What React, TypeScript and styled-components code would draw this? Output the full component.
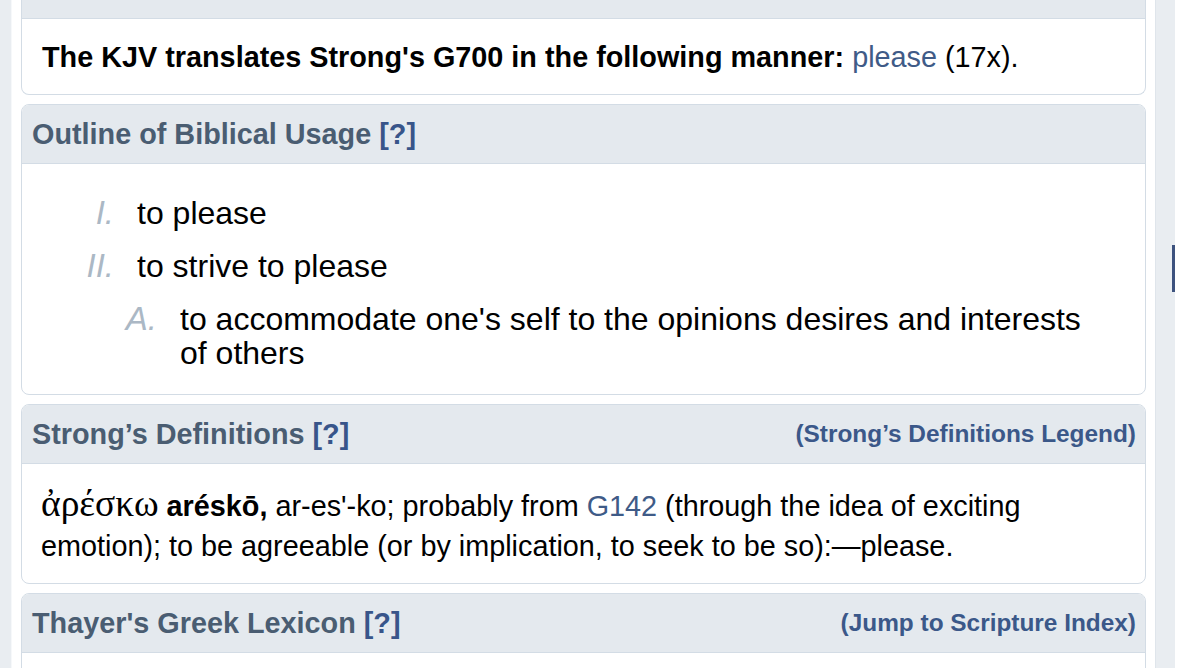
import React from "react";
import styled, { createGlobalStyle } from "styled-components";

const GlobalStyle = createGlobalStyle`
  html, body {
    margin: 0;
    padding: 0;
    background: #ffffff;
  }
  body {
    font-family: "Liberation Sans", Arial, sans-serif;
    color: #000000;
  }
`;

const Page = styled.div`
  display: flex;
  height: 668px;
  overflow: hidden;
  background: #ffffff;
`;

const LeftStrip = styled.div`
  width: 11px;
  flex-shrink: 0;
  background: #e9edf1;
  border-right: 1px solid #f6f8fa;
`;

const RightStrip = styled.div`
  width: 19px;
  flex-shrink: 0;
  background: #e9edf1;
  border-left: 1px solid #dfe5eb;
  display: flex;
  flex-direction: column;
  align-items: flex-end;
`;

const ScrollMark = styled.div`
  width: 3px;
  height: 47px;
  margin-top: 245px;
  background: #3d527e;
`;

const RightGap = styled.div`
  width: 12px;
  flex-shrink: 0;
  background: #ffffff;
`;

const Main = styled.main`
  flex: 1;
  min-width: 0;
  padding: 0 9px;
  display: flex;
  flex-direction: column;
  gap: 9px;
`;

const Card = styled.section<{ $cut?: boolean }>`
  border: 1px solid #d3dce5;
  border-top: ${(p) => (p.$cut ? "none" : "1px solid #d3dce5")};
  border-radius: ${(p) => (p.$cut ? "0 0 8px 8px" : "8px")};
  overflow: hidden;
  background: #ffffff;
  flex-shrink: 0;
`;

const CardHeader = styled.header<{ $stub?: boolean }>`
  display: flex;
  justify-content: space-between;
  align-items: center;
  background: #e4e9ee;
  border-bottom: 1px solid #d3dce5;
  padding: ${(p) => (p.$stub ? "0" : "9px 9px 9px 10px")};
  height: ${(p) => (p.$stub ? "18px" : "auto")};
  line-height: 40px;
`;

const Title = styled.h2`
  margin: 0;
  font-size: 28.8px;
  font-weight: bold;
  color: #4a5d72;
`;

const Help = styled.a`
  color: #38558a;
  text-decoration: none;
`;

const HeaderLink = styled.a`
  font-size: 24.4px;
  font-weight: bold;
  color: #3b5889;
  text-decoration: none;
`;

const CardBody = styled.div<{ $pad: string }>`
  padding: ${(p) => p.$pad};
  font-size: 28.8px;
  line-height: 40px;
`;

const Strong = styled.b`
  font-weight: bold;
`;

const Link = styled.a`
  color: #3f5b87;
  text-decoration: none;
`;

const Greek = styled.span`
  font-family: "Liberation Serif", "DejaVu Serif", serif;
  font-size: 37.5px;
  line-height: 0.8;
`;

const OutlineList = styled.ol`
  list-style: none;
  margin: 0;
  padding: 0;
  display: flex;
  flex-direction: column;
  gap: 19px;
`;

const Item = styled.li<{ $marker: number; $gap: number }>`
  display: grid;
  grid-template-columns: ${(p) => p.$marker}px 1fr;
  column-gap: ${(p) => p.$gap}px;
  font-size: 32px;
  line-height: 34px;
`;

const Marker = styled.span`
  display: flex;
  justify-content: flex-end;
  white-space: nowrap;
  font-style: italic;
  font-size: 33px;
  color: #abb8c5;
`;

const ItemText = styled.div`
  display: flex;
  flex-direction: column;
  gap: 19px;
`;

export default function App() {
  return (
    <>
      <GlobalStyle />
      <Page>
        <LeftStrip />
        <Main>
          <Card $cut>
            <CardHeader $stub />
            <CardBody $pad="18px 20px 17px 20px">
              <Strong>The KJV translates Strong's G700 in the following manner:</Strong>{" "}
              <Link href="#">please</Link> (17x).
            </CardBody>
          </Card>

          <Card>
            <CardHeader>
              <Title>
                Outline of Biblical Usage <Help href="#">[?]</Help>
              </Title>
            </CardHeader>
            <CardBody $pad="32px 48px 24px 46px">
              <OutlineList>
                <Item $marker={46} $gap={23}>
                  <Marker>I.</Marker>
                  <ItemText>to please</ItemText>
                </Item>
                <Item $marker={46} $gap={23}>
                  <Marker>II.</Marker>
                  <ItemText>
                    <span>to strive to please</span>
                    <OutlineList>
                      <Item $marker={20} $gap={23}>
                        <Marker>A.</Marker>
                        <span>
                          to accommodate one's self to the opinions desires and interests of others
                        </span>
                      </Item>
                    </OutlineList>
                  </ItemText>
                </Item>
              </OutlineList>
            </CardBody>
          </Card>

          <Card>
            <CardHeader>
              <Title>
                Strong’s Definitions <Help href="#">[?]</Help>
              </Title>
              <HeaderLink href="#">(Strong’s Definitions Legend)</HeaderLink>
            </CardHeader>
            <CardBody $pad="22px 20px 17px 19px">
              <Greek>ἀρέσκω</Greek> <Strong>aréskō,</Strong> ar-es'-ko; probably from{" "}
              <Link href="#">G142</Link> (through the idea of exciting emotion); to be agreeable (or by
              implication, to seek to be so):—please.
            </CardBody>
          </Card>

          <Card>
            <CardHeader>
              <Title>
                Thayer's Greek Lexicon <Help href="#">[?]</Help>
              </Title>
              <HeaderLink href="#">(Jump to Scripture Index)</HeaderLink>
            </CardHeader>
            <CardBody $pad="40px 20px 40px 20px" />
          </Card>
        </Main>
        <RightStrip>
          <ScrollMark />
        </RightStrip>
        <RightGap />
      </Page>
    </>
  );
}
